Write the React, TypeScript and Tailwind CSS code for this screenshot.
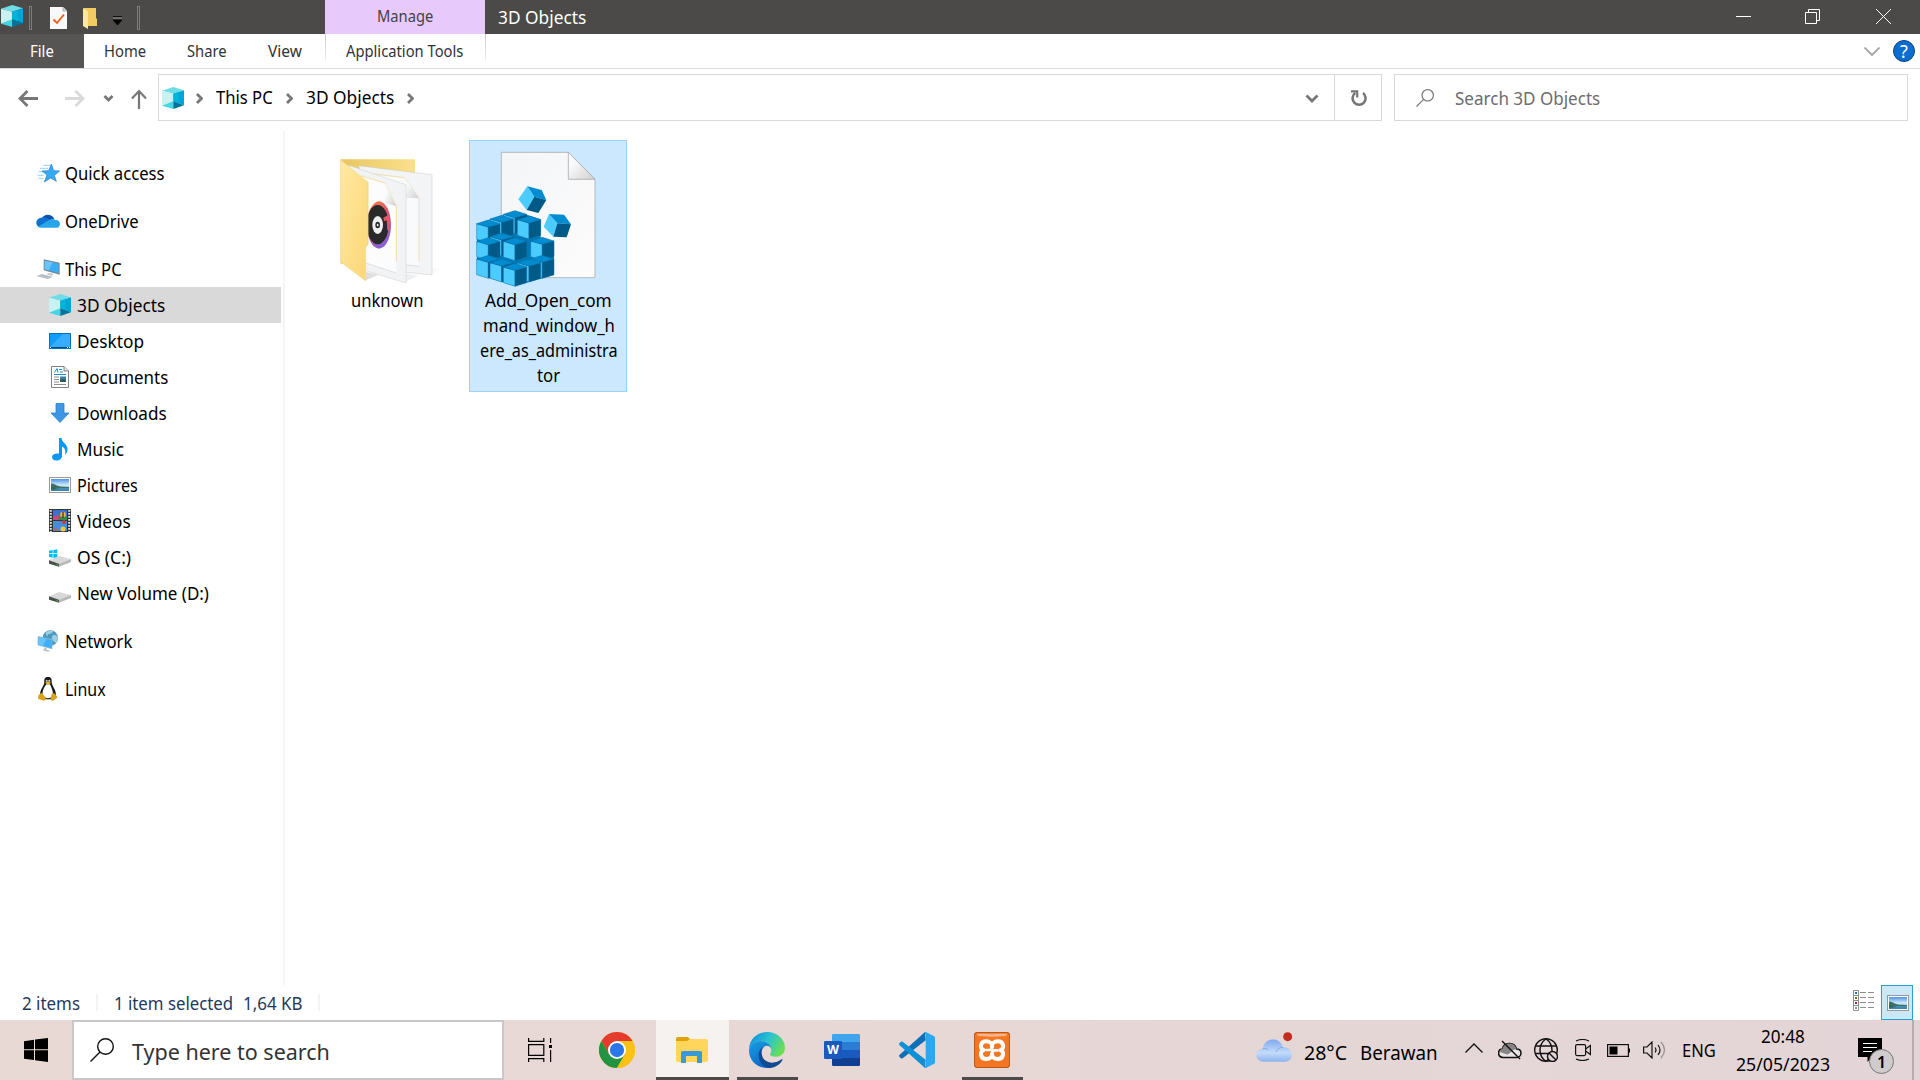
import { useLayoutEffect, useRef, useState, type ReactNode } from "react";

/** Single line of text, condensed so that it fills the width of its box. */
function T({ className = "", children }: { className?: string; children: string }) {
  const box = useRef<HTMLSpanElement>(null);
  const inner = useRef<HTMLSpanElement>(null);
  const [scale, setScale] = useState(1);
  useLayoutEffect(() => {
    if (!box.current || !inner.current) return;
    setScale(box.current.clientWidth / inner.current.offsetWidth);
  }, []);
  return (
    <span ref={box} className={"block shrink-0 whitespace-nowrap " + className}>
      <span ref={inner} className="inline-block origin-left" style={{ transform: `scaleX(${scale})` }}>
        {children}
      </span>
    </span>
  );
}

function Cube3D() {
  return (
    <svg className="h-[22px] w-[22px] shrink-0" viewBox="0 0 66 66">
      <path d="M0 11 34 0 66 10 34 20Z" fill="#6fdde8" />
      <path d="M0 11 34 20V44L0 56Z" fill="#c9f1f1" />
      <path d="M34 20 66 10V55L34 43Z" fill="#00a5da" />
      <path d="M34 20 50 15V49L34 43Z" fill="#00b6d8" />
      <path d="M0 56 34 43V66Z" fill="#42d5e4" />
      <path d="M34 43 66 55 34 66Z" fill="#00749c" />
    </svg>
  );
}

function PictureArt() {
  return (
    <svg className="h-4 w-[22px] shrink-0" viewBox="0 0 22 16">
      <defs>
        <linearGradient id="sky" x1="0" y1="0" x2="0" y2="1">
          <stop offset="0" stopColor="#4b93e6" />
          <stop offset=".5" stopColor="#cfe9fa" />
          <stop offset="1" stopColor="#5aa2cf" />
        </linearGradient>
      </defs>
      <rect x=".5" y=".5" width="21" height="15" fill="#fff" stroke="#989898" />
      <rect x="2" y="2" width="18" height="12" fill="url(#sky)" />
      <path d="M2 6.500c3 0 5 2 8 2.700 4 .6 7 .8 10 .8v1.500H2z" fill="#3d6f62" />
      <path d="M2 11.500h18V14H2z" fill="#3c87b5" />
      <path d="M2 10l8 2-8 1z" fill="#2f6b5a" />
    </svg>
  );
}

function Drive({ os }: { os?: boolean }) {
  return (
    <svg className="mt-1 h-[22px] w-[22px] shrink-0" viewBox="0 0 66 66">
      {os && (
        <g fill="#00bcf2">
          <path d="M0 8 11 6v10H0zM13 6l12-2v12H13zM0 18h11v11L0 27zM13 18h12v13l-12-2z" />
        </g>
      )}
      <path d="M0 37 30 24 66 33 30 47Z" fill="#d8d8d8" />
      <path d="M0 37 30 47V56L0 47Z" fill="#4b4f50" />
      <path d="M30 47 66 33V42L30 56Z" fill="#b5b7b8" />
      <path d="M22 48l6 2v3l-6-2z" fill="#3ec13e" />
    </svg>
  );
}

const icons: Record<string, ReactNode> = {
  quick: (
    <svg className="h-[22px] w-[24px]" viewBox="0 0 72 66">
      <path d="M22 10h20M12 19h24M8 29h14M5 40h18M8 49h14" stroke="#83c9f5" strokeWidth="2.500" />
      <path d="M46 6l7 20 18 1-16 13 6 18-17-10-19 12 8-21-15-12 20-1z" fill="#35aaf3" stroke="#1b7fd0" strokeWidth="2" />
    </svg>
  ),
  onedrive: (
    <svg className="mb-[2px] h-[22px] w-[24px]" viewBox="0 0 72 66">
      <path d="M18 27c5-12 29-15 37 3l-14 12z" fill="#0a50ac" />
      <path d="M12 55C-5 52-2 25 18 26c10-3 16 2 23 6L12 55z" fill="#0f70cf" />
      <path d="M41 32c4-4 14-4 16 1 13-2 19 12 12 20-1 1-4 3-8 3H14c-3 0-6-1-8-3z" fill="#28a5ea" />
    </svg>
  ),
  pc: (
    <svg className="mt-[2px] h-[24px] w-[24px]" viewBox="0 0 72 72">
      <path d="M23 4 71 14V50L23 37Z" fill="#7d8790" />
      <path d="M26 8 68 17V45L26 34Z" fill="#3aaef6" />
      <path d="M26 8 50 13 38 37 26 34Z" fill="#6cc5fa" />
      <path d="M40 45l14 3-8 5-15-4zM1 54l16-6 34 8-16 7z" fill="#c3c9ce" />
      <path d="M8 54l31 7M14 51l31 7" stroke="#8e979f" strokeWidth="1.500" strokeDasharray="4 2" />
    </svg>
  ),
  cube: <Cube3D />,
  desktop: (
    <svg className="h-4 w-[22px]" viewBox="0 0 22 16">
      <rect x=".5" y=".5" width="21" height="15" fill="#109cff" stroke="#0072bd" />
      <path d="M1 14 14 1h7v13z" fill="#36adff" />
      <path d="M1 14.500h20" stroke="#054d80" />
      <path d="M1 14.500h1M18 14.500h1M20 14.500h1" stroke="#fff" />
    </svg>
  ),
  documents: (
    <svg className="h-[22px] w-[18px]" viewBox="0 0 18 22">
      <path d="M.5.500H13l4.500 4.500V21.500H.5z" fill="#fdfdfd" stroke="#818181" />
      <path d="M13 .5V5h4.500" fill="#e2e2e2" stroke="#818181" />
      <path d="M3.500 6.500 6 2.500l1 4M8 3.500h3M9 6h3M3 8.500h12" stroke="#1b8edb" fill="none" />
      <path d="M3 11h5M3 13.500h5M3 16h5M3 18.500h12" stroke="#8f8f8f" />
      <rect x="9" y="10.500" width="6" height="5" fill="#3d7ea6" />
      <path d="M9 14l3-1 3 1v2H9z" fill="#2f5d4d" />
    </svg>
  ),
  downloads: (
    <svg className="h-[20px] w-[20px]" viewBox="0 0 20 20">
      <path d="M6 .5h8V10h5l-9 9.500L1 10h5z" fill="#3d97e5" stroke="#2b7fca" strokeWidth=".8" />
    </svg>
  ),
  music: (
    <svg className="h-[23px] w-[16px]" viewBox="0 0 16 23">
      <path d="M7 0h2.500c.2 4.500 6.500 6.500 6 11.500-.2 2.500-1 4-2.500 5.500.8-4 .5-6.500-3-8.500V18c0 2.500-2.400 4.500-5.500 4.500S0 21 0 18.700 3 15 7 15.500z" fill="#0a98f5" />
    </svg>
  ),
  pictures: <PictureArt />,
  videos: (
    <svg className="mb-[2px] h-[23px] w-[22px]" viewBox="0 0 22 23">
      <rect width="22" height="23" fill="#343434" />
      <path d="M1.800 1v22M20.200 1v22" stroke="#e5e5e5" strokeWidth="2" strokeDasharray="1.700 1.300" />
      <rect x="4" y="1" width="14" height="10" fill="#3a73cf" />
      <rect x="4" y="12" width="14" height="10" fill="#4a8be0" />
      <path d="M4 8l4-2 10 3v2H4z" fill="#d14578" />
      <path d="M10 8h8v3H9z" fill="#3e8a42" />
      <circle cx="14" cy="5.500" r="2.800" fill="#f0b92b" />
      <path d="M14 3v6" stroke="#2c2c2c" strokeWidth="1.200" />
      <circle cx="15" cy="13" r="2" fill="#cf3d2a" />
      <circle cx="14" cy="20" r="2.500" fill="#f0cb2b" />
      <circle cx="6.500" cy="20.500" r="1.500" fill="#d5573e" />
    </svg>
  ),
  os: <Drive os />,
  drive: <Drive />,
  network: (
    <svg className="h-[22px] w-[22px]" viewBox="0 0 66 66">
      <circle cx="40" cy="24" r="23" fill="#4c97bd" />
      <path d="M26 8c6-7 18-9 24-6l-6 8-10 3-4 7zM48 14l13 3c3 8 1 17-5 22l-8-7-4-9z" fill="#9fcde2" />
      <path d="M2 18 46 28V58L2 46Z" fill="#8fb9d3" />
      <path d="M4 21 44 30V55L4 44Z" fill="#3eaef7" />
      <path d="M4 21 28 26 18 48 4 44Z" fill="#69c4fb" />
      <path d="M22 52l6 2v5l12 3-7 3-18-5 7-2z" fill="#b5bdc3" />
    </svg>
  ),
  linux: (
    <svg className="h-[24px] w-[20px]" viewBox="0 0 60 72">
      <path d="M30 0c-9 0-12 6-11 15 1 10-14 22-13 40l12 12h25l11-12c0-19-13-29-13-40C42 6 39 0 30 0z" fill="#16191b" />
      <path d="M25 22c-5 7-13 19-11 31 4 13 26 15 31 0 1-11-6-23-9-31z" fill="#fff" />
      <circle cx="26" cy="11" r="3" fill="#d6d6d6" />
      <circle cx="34" cy="11" r="3" fill="#d6d6d6" />
      <path d="M21 17l9-4 9 4-9 7z" fill="#eab526" />
      <path d="M10 47l14 15c0 8-5 10-11 8L1 66c-2-4 0-6 1-12zM49 49l10 12-13 10c-7 1-9-3-8-9l4-13z" fill="#d9a31b" />
    </svg>
  ),
};

type Row = { icon: string; label: string; w: string; sub?: boolean; active?: boolean; gap?: boolean };
const rows: Row[] = [
  { icon: "quick", label: "Quick access", w: "w-[100px]" },
  { icon: "onedrive", label: "OneDrive", w: "w-[74px]", gap: true },
  { icon: "pc", label: "This PC", w: "w-[57px]", gap: true },
  { icon: "cube", label: "3D Objects", w: "w-[88px]", sub: true, active: true },
  { icon: "desktop", label: "Desktop", w: "w-[67px]", sub: true },
  { icon: "documents", label: "Documents", w: "w-[91px]", sub: true },
  { icon: "downloads", label: "Downloads", w: "w-[90px]", sub: true },
  { icon: "music", label: "Music", w: "w-[47px]", sub: true },
  { icon: "pictures", label: "Pictures", w: "w-[61px]", sub: true },
  { icon: "videos", label: "Videos", w: "w-[54px]", sub: true },
  { icon: "os", label: "OS (C:)", w: "w-[54px]", sub: true },
  { icon: "drive", label: "New Volume (D:)", w: "w-[132px]", sub: true },
  { icon: "network", label: "Network", w: "w-[67px]", gap: true },
  { icon: "linux", label: "Linux", w: "w-[41px]", gap: true },
];

function Sidebar() {
  return (
    <nav className="h-[854px] w-[285px] shrink-0 border-r-2 border-[#f5f5f5] pt-6">
      {rows.map((r) => (
        <div
          key={r.label}
          className={
            "flex h-9 w-[281px] items-center " +
            (r.gap ? "mt-3 " : "") +
            (r.sub ? "pl-12 " : "pl-9 ") +
            (r.active ? "bg-[#d9d9d9]" : "")
          }
        >
          <span className="flex w-6 shrink-0 items-center justify-center">{icons[r.icon]}</span>
          <T className={"ml-[5px] mt-px " + r.w}>{r.label}</T>
        </div>
      ))}
    </nav>
  );
}

function FolderArt() {
  return (
    <svg className="ml-[29px] h-[130px] w-[110px] self-start" viewBox="50 80 330 390">
      <defs>
        <linearGradient id="flap" x1="0" y1="0" x2="1" y2="1">
          <stop offset="0" stopColor="#ffe9a2" />
          <stop offset="1" stopColor="#fbd775" />
        </linearGradient>
        <linearGradient id="back" x1="0" y1="0" x2="1" y2="0">
          <stop offset="0" stopColor="#e8c560" />
          <stop offset="1" stopColor="#fbe08c" />
        </linearGradient>
        <linearGradient id="fold" x1="0" y1="0" x2="1" y2="1">
          <stop offset=".3" stopColor="#fafafa" />
          <stop offset="1" stopColor="#cfcfcf" />
        </linearGradient>
        <linearGradient id="shade" x1="0" y1="0" x2="1" y2="0">
          <stop offset="0" stopColor="#b5b5b5" />
          <stop offset="1" stopColor="#fff" />
        </linearGradient>
        <linearGradient id="ring" x1="0" y1="0" x2=".4" y2="1">
          <stop offset="0" stopColor="#fb8a3c" />
          <stop offset=".45" stopColor="#e0536b" />
          <stop offset="1" stopColor="#8a62cf" />
        </linearGradient>
      </defs>
      <path d="M330 410l45 5-42 18zM136 425l40 8-40 17zM256 430l40 5-40 20z" fill="url(#shade)" opacity=".45" />
      <path d="M61 87H284V400H61Z" fill="url(#back)" />
      <path d="M114 106 335 133V434L250 425Z" fill="#f3f4f5" stroke="#c9c9c9" strokeWidth="1.500" />
      <path d="M150 130 252 142 296 204V408L210 400Z" fill="#fafafb" />
      <path d="M150 130 252 142 296 204M296 285V392" fill="none" stroke="#ead28b" strokeWidth="2" />
      <path d="M296 204V285M296 408 256 404" fill="none" stroke="#c4c4c4" strokeWidth="1.500" />
      <path d="M252 142 296 204 256 202Z" fill="url(#fold)" />
      <path d="M85 105 257 163V458L100 410Z" fill="#f2f3f4" stroke="#cfcfcf" strokeWidth="1.500" />
      <path d="M105 130 193 158 228 228V428L110 390Z" fill="#fcfcfd" />
      <path d="M122 136 193 158 228 228V392" fill="none" stroke="#efd27b" strokeWidth="2" />
      <path d="M193 158 228 228 195 218Z" fill="url(#fold)" />
      <path d="M136 398 228 428" stroke="#aaa" strokeWidth="1.500" strokeDasharray="4 2" />
      <ellipse cx="176" cy="284" rx="36" ry="71" fill="url(#ring)" />
      <ellipse cx="172" cy="283" rx="33" ry="59" fill="#2b2a2b" />
      <path d="M189 262l18-10 2 50-8-2-2-30-8 3z" fill="#e0576a" />
      <ellipse cx="172" cy="284" rx="16" ry="27" fill="#f0f0f0" />
      <ellipse cx="172" cy="284" rx="7" ry="10" fill="#2b2a2b" />
      <ellipse cx="172" cy="284" rx="2.500" ry="4" fill="#fff" />
      <path d="M61 88 143 155V342L136 350V452L61 395Z" fill="url(#flap)" stroke="#ecca6c" strokeWidth="1" />
      <path d="M136 350 143 342V155" fill="none" stroke="#f3d67e" strokeWidth="2" />
    </svg>
  );
}

const blocks: [number, number][] = [
  [585, 263], [545, 277], [505, 291],
  [545, 330], [505, 344], [627, 279], [667, 343], [505, 397], [667, 397],
  [585, 344], [545, 408], [627, 408], [585, 421],
];

function Block({ x, y }: { x: number; y: number }) {
  return (
    <g transform={`translate(${x} ${y})`} stroke="#0b6ea6" strokeWidth="1.500">
      <path d="M0 0-35-10V37L0 48Z" fill="#4ccbff" />
      <path d="M0 0 35-10V37L0 48Z" fill="#005a87" />
      <path d="M0 0-35-10 0-21 35-10Z" fill="#008cd0" />
    </g>
  );
}

function RegistryArt() {
  return (
    <svg className="ml-1 h-[138px] w-[130px] self-start" viewBox="465 60 390 414">
      <defs>
        <linearGradient id="page" x1="0" y1="0" x2="1" y2="1">
          <stop offset="0" stopColor="#f4f5f6" />
          <stop offset="1" stopColor="#fcfcfd" />
        </linearGradient>
      </defs>
      <path d="M544 67H745L825 148V443H544Z" fill="url(#page)" stroke="#a9adb0" strokeWidth="2.500" />
      <path d="M745 67 825 148H745Z" fill="url(#fold)" stroke="#a9adb0" strokeWidth="2.500" />
      <path d="M471 283 585 243 662 268V325L702 335V435L585 468 471 432Z" fill="#0079b5" />
      {blocks.map(([x, y]) => (
        <Block key={x + "-" + y} x={x} y={y} />
      ))}
      <path d="M595 208 622 169 643 200 620 240Z" fill="#4ccbff" />
      <path d="M622 169 665 180 679 210 643 200Z" fill="#008cd0" />
      <path d="M643 200 679 210 655 249 620 240Z" fill="#005a87" />
      <path d="M671 290 687 252 712 280 700 320Z" fill="#4ccbff" />
      <path d="M687 252 732 254 753 283 712 280Z" fill="#008cd0" />
      <path d="M712 280 753 283 740 322 700 320Z" fill="#005a87" />
    </svg>
  );
}

function TitleBar() {
  return (
    <header className="flex h-[34px] bg-[#4c4a48]">
      <div className="flex w-[325px] items-start">
        <span className="ml-px mt-[5px]"><Cube3D /></span>
        <span className="ml-[6px] mt-[6px] h-6 w-[3px] border border-[#7e7c7a]" />
        <svg className="ml-[18px] mt-[7px] h-[22px] w-[17px]" viewBox="0 0 17 22">
          <path d="M0 0h13l4 4v18H0z" fill="#f7f9fb" />
          <path d="M13 0v4h4" fill="#cfd3d6" stroke="#8c8c8c" strokeWidth=".6" />
          <path d="M3.500 12.500 7 16l7-8.500" fill="none" stroke="#f25a14" strokeWidth="1.800" />
        </svg>
        <svg className="ml-4 mt-2 h-[21px] w-[14px]" viewBox="0 0 14 21">
          <path d="M1 0h12v10l1 1v7H1z" fill="#f2cb62" />
          <path d="M0 0l5 3.500V21l-5-3z" fill="#ffe79b" />
        </svg>
        <svg className="ml-4 mt-4 h-[9px] w-[9px]" viewBox="0 0 9 9">
          <path d="M0 .5h9M0 4h9L4.500 9z" fill="#000" stroke="#000" strokeWidth=".8" />
          <path d="M0 2h9" stroke="#a8a6a4" strokeWidth=".8" />
        </svg>
        <span className="ml-[15px] mt-[6px] h-6 w-[3px] border border-[#7e7c7a]" />
      </div>
      <div className="flex w-40 items-center justify-center bg-[#e8c9fb] text-[15.500px] text-[#444]">
        <T className="mb-[2px] mr-px w-[56px]">Manage</T>
      </div>
      <div className="flex items-center pl-[13px] text-white">
        <T className="w-[88px]">3D Objects</T>
      </div>
      <svg className="ml-auto mr-7 mt-[9px] h-[15px] w-[156px]" viewBox="0 0 156 15" fill="none" stroke="#fff">
        <path d="M0 7.500h15M69.500 3.500h11v11h-11zM72.500 3.500v-3h11v11h-3M140 0l15 15M155 0l-15 15" />
      </svg>
    </header>
  );
}

function Ribbon() {
  return (
    <div className="flex h-[35px] items-center border-b border-[#dadbdc] text-[15.500px] text-[#333]">
      <div className="flex h-[34px] w-[84px] items-center bg-[#575553] pl-[30px] text-white">
        <T className="w-6">File</T>
      </div>
      <T className="ml-5 w-[42px]">Home</T>
      <T className="ml-[41px] w-10">Share</T>
      <T className="ml-[41px] w-[34px]">View</T>
      <div className="ml-[23px] flex h-[34px] w-[161px] justify-between">
        <span className="h-[26px] w-px bg-linear-to-b from-[#c8c8c8] to-[#eee]" />
        <T className="mr-[2px] mt-[6px] w-[117px]">Application Tools</T>
        <span className="h-[26px] w-px bg-linear-to-b from-[#c8c8c8] to-[#eee]" />
      </div>
      <svg className="ml-auto mt-px h-[9px] w-4" viewBox="0 0 16 9" fill="none" stroke="#a3a3a3" strokeWidth="1.800">
        <path d="M.5.500 8 8l7.500-7.500" />
      </svg>
      <span className="ml-[13px] mr-[5px] flex h-[22px] w-[22px] items-center justify-center rounded-full border border-[#04427f] bg-[#0a6dcf] text-[18px] leading-none text-white">
        ?
      </span>
    </div>
  );
}

function Crumb({ className }: { className: string }) {
  return (
    <svg className={"h-[11px] w-[7px] shrink-0 " + className} viewBox="0 0 7 11" fill="none" stroke="#777" strokeWidth="2.800">
      <path d="M1 1l4.500 4.500L1 10" />
    </svg>
  );
}

function AddressBar() {
  return (
    <div className="flex h-[62px] items-start pt-[5px]">
      <svg className="h-[47px] w-[158px]" viewBox="0 0 158 47" fill="none" stroke="#777" strokeWidth="2.800">
        <path d="M38 24.500H21M27.500 17l-7.500 7.500 7.500 7.500" />
        <path d="M65 24.500h17M75.500 17l7.500 7.500-7.500 7.500" stroke="#dadada" />
        <path d="M104.500 22l4 4 4-4" />
        <path d="M139 35V17M132 24.500l7-7.500 7 7.500" strokeWidth="2.200" />
      </svg>
      <div className="flex h-[47px] w-[1224px] items-center border border-[#d9d9d9] pl-[3px]">
        <Cube3D />
        <Crumb className="ml-3 mt-px" />
        <T className="ml-[13px] w-[57px]">This PC</T>
        <Crumb className="ml-[13px] mt-px" />
        <T className="ml-[13px] w-[88px]">3D Objects</T>
        <Crumb className="ml-[13px] mt-px" />
        <svg className="ml-auto mt-px h-[9px] w-[14px]" viewBox="0 0 14 9" fill="none" stroke="#777" strokeWidth="2.800">
          <path d="M1.500 1.500 7 7l5.500-5.500" />
        </svg>
        <span className="ml-[15px] flex h-full w-[47px] items-center justify-center border-l border-[#d9d9d9]">
          <svg className="ml-[2px] h-4 w-4" viewBox="0 0 16 16" fill="none" stroke="#777" strokeWidth="2.600">
            <path d="M4.200 3A6.500 6.500 0 1 0 12 3" />
            <path d="M0 1.300h6.200V7.500" strokeWidth="2.200" />
          </svg>
        </span>
      </div>
      <div className="ml-3 flex h-[47px] w-[514px] items-center border border-[#d9d9d9] text-[#6d6d6d]">
        <svg className="ml-[21px] h-[18px] w-[18px]" viewBox="0 0 18 18" fill="none" stroke="#777" strokeWidth="1.200">
          <circle cx="11.700" cy="6.300" r="5.700" />
          <path d="M7.700 10.300.5 17.500" />
        </svg>
        <T className="ml-[21px] mt-[2px] w-[145px]">Search 3D Objects</T>
      </div>
    </div>
  );
}

function StatusBar() {
  return (
    <div className="flex h-[35px] items-center text-[#1e395b]">
      <T className="ml-[22px] mt-px w-[58px]">2 items</T>
      <span className="ml-4 h-[17px] w-[2px] bg-[#f3f3f3]" />
      <T className="ml-4 mt-px w-[119px]">1 item selected</T>
      <T className="ml-[10px] mt-px w-[59px]">1,64 KB</T>
      <span className="ml-4 h-[17px] w-[2px] bg-[#f3f3f3]" />
      <svg className="mb-1 ml-auto h-[21px] w-[22px]" viewBox="0 0 22 21" fill="none">
        <path d="M.5.500h5v20h-5zM.5 5.500h5M.5 10.500h5M.5 15.500h5" stroke="#8d8d8d" />
        <path d="M7 2.500h6M15 2.500h6M7 7.500h6M15 7.500h6M7 12.500h6M15 12.500h6M7 17.500h6M15 17.500h6" stroke="#8d8d8d" />
        <path d="M2 3h2" stroke="#1d6fb5" strokeWidth="2" />
        <path d="M2 8h2" stroke="#6f7a20" strokeWidth="2" />
        <path d="M2 13h2" stroke="#c41f1f" strokeWidth="2" />
        <path d="M2 18h2" stroke="#7fa58f" strokeWidth="2" />
      </svg>
      <span className="ml-[6px] mr-[7px] flex h-[35px] w-8 justify-center border border-[#26a0da] bg-[#cbe8f6] pl-px pt-[9px]">
        <PictureArt />
      </span>
    </div>
  );
}

function ChromeLogo() {
  return (
    <svg className="h-9 w-9" viewBox="0 0 48 48">
      <circle cx="24" cy="24" r="24" fill="#fbc116" />
      <path d="M24 12H44.800A24 24 0 0 0 3.200 12L13.600 30Z" fill="#e33b2e" />
      <path d="M3.200 12A24 24 0 0 0 24 48L34.400 30 24 24 13.600 30Z" fill="#229342" />
      <path d="M24 48A24 24 0 0 0 44.800 12H24L34.400 30Z" fill="#fbc116" />
      <circle cx="24" cy="24" r="12" fill="#fff" />
      <circle cx="24" cy="24" r="9.500" fill="#2a76ea" />
    </svg>
  );
}

function ExplorerLogo() {
  return (
    <svg className="h-[26px] w-8" viewBox="0 0 32 26">
      <path d="M0 2Q0 0 2 0h10l3 3v5H0z" fill="#e0a106" />
      <path d="M0 4h11l3-2h16q2 0 2 2v19q0 2-2 2H2q-2 0-2-2z" fill="#ffd55c" />
      <path d="M5 26V15.500Q5 14 6.500 14h18q1.500 0 1.500 1.500V26h-5v-7H10v7z" fill="#3a97dc" />
    </svg>
  );
}

function EdgeLogo() {
  return (
    <svg className="h-9 w-9" viewBox="0 0 108 108">
      <defs>
        <linearGradient id="edgeTop" x1="0" y1=".2" x2="1" y2=".6">
          <stop offset="0" stopColor="#0c8fdc" />
          <stop offset=".5" stopColor="#2cc3d0" />
          <stop offset="1" stopColor="#6be04f" />
        </linearGradient>
        <linearGradient id="edgeLeft" x1="0" y1="0" x2=".6" y2="1">
          <stop offset="0" stopColor="#1ba0e3" />
          <stop offset="1" stopColor="#0a63c4" />
        </linearGradient>
      </defs>
      <path d="M0 50C2 20 26 0 54 0c32 0 54 23 54 47 0 18-13 27-27 27-12 0-18-3-18-7 0-3 4-4 4-12C67 40 52 27 34 27 17 27 3 38 0 50z" fill="url(#edgeTop)" />
      <path d="M0 56C0 38 14 27 34 27c18 0 33 12 33 27 0-7-6-13-13-13-11 0-19 12-19 25 0 20 13 37 34 40-5 2-10 2-15 2C24 108 0 84 0 56z" fill="url(#edgeLeft)" />
      <path d="M44 44c-9 11-8 30 4 41 16 12 37 7 50-3 2-1 4 0 2 3-7 12-21 23-38 23-19 0-33-20-33-39 0-10 6-21 15-25z" fill="#114a93" />
    </svg>
  );
}

function WordLogo() {
  return (
    <svg className="h-9 w-9" viewBox="0 0 108 108">
      <path d="M24 10Q24 6 28 6H104Q108 6 108 10V30H24Z" fill="#41a5ee" />
      <path d="M24 30H108V54H24Z" fill="#2b7cd3" />
      <path d="M24 54H108V78H24Z" fill="#185abd" />
      <path d="M24 78H108V98Q108 102 104 102H28Q24 102 24 98Z" fill="#103f91" />
      <rect x="0" y="27" width="54" height="54" rx="4" fill="#185abd" />
      <text x="27" y="67" textAnchor="middle" fill="#fff" className="font-['Open_Sans'] text-[37px] font-bold">W</text>
    </svg>
  );
}

function CodeLogo() {
  return (
    <svg className="h-9 w-9" viewBox="0 0 108 108">
      <path d="M80 25 12 78Q9 81 6 79L1 74Q-1 71 2 68L78 0Z" fill="#0b70b5" />
      <path d="M80 83 12 30Q9 27 6 29L1 34Q-1 37 2 40L78 108Z" fill="#0f8fd8" />
      <path d="M76 1Q78-1 82 1L104 12Q108 14 108 18V90Q108 94 104 96L82 107Q78 109 76 107L80 100V8Z" fill="#29a8f3" />
    </svg>
  );
}

function XamppLogo() {
  return (
    <svg className="h-9 w-9" viewBox="0 0 108 108">
      <rect x="1" y="1" width="106" height="106" rx="9" fill="#f37623" stroke="#b14f10" strokeWidth="3" />
      <path d="M10 5H98V11Q54 17 10 11Z" fill="#fbb183" />
      <g fill="none" stroke="#fff" strokeWidth="12" strokeLinecap="round" strokeLinejoin="round">
        <path d="M54 44C54 35 48 28 37 28 18 28 16 49 29 54 16 58 18 81 37 81 48 81 54 74 54 66" />
        <path d="M54 44C54 35 60 28 71 28 90 28 92 49 79 54 92 58 90 81 71 81 60 81 54 74 54 66" />
        <path d="M37 54H45Q54 54 54 45M54 64Q54 55 63 55H71" strokeWidth="8" />
      </g>
    </svg>
  );
}

function TaskButton({ line, active, children }: { line?: boolean; active?: boolean; children: ReactNode }) {
  return (
    <div className={"flex h-[60px] w-[73px] flex-col items-center " + (active ? "bg-[#f6f2f0]" : "")}>
      <span className="mr-[2px] flex h-[57px] items-center pt-[3px]">{children}</span>
      {active && <span className="h-[3px] w-full bg-[#4c4a48]" />}
      {line && <span className="h-[3px] w-[61px] bg-[#4c4a48]" />}
    </div>
  );
}

function Tray() {
  return (
    <div className="flex h-[60px] items-center text-black">
      <svg className="mb-1 ml-[227px] h-[30px] w-9 shrink-0 overflow-visible" viewBox="0 0 108 90">
        <defs>
          <linearGradient id="cloud" x1="0" y1="0" x2="0" y2="1">
            <stop offset="0" stopColor="#7fa9ef" />
            <stop offset=".6" stopColor="#c4dbfa" />
            <stop offset="1" stopColor="#8db4ee" />
          </linearGradient>
        </defs>
        <path d="M22 86C-6 86-5 47 20 47 27 11 73 11 81 43c33-4 36 43 6 43z" fill="url(#cloud)" />
        <path d="M20 47c9-2 14 1 17 4M60 57c4-10 12-14 21-14" fill="none" stroke="#7199dd" strokeWidth="2" />
        <circle cx="95" cy="11" r="13.500" fill="#c42b1c" />
      </svg>
      <T className="ml-3 mt-1 w-[43px] text-[20px]">28°C</T>
      <T className="ml-[13px] mt-1 w-[78px] text-[20px]">Berawan</T>
      <svg className="mb-1 ml-[27px] h-[10px] w-[18px]" viewBox="0 0 18 10" fill="none" stroke="#111" strokeWidth="1.300">
        <path d="M.5 9.500 9 1l8.500 8.500" />
      </svg>
      <svg className="ml-[15px] h-[20px] w-6" viewBox="0 0 24 20">
        <path d="M5 17.500C-1 17-.5 9 4.500 9c1-6.500 12-8 14 0 6-.5 6 8.500 0 8.500z" fill="#e8e4e6" stroke="#111" strokeWidth="1.500" />
        <path d="M1.500 12C2 9.500 4 9 4.500 9c1-6.500 12-8 14 0-4 0-5 4-9 5.500z" fill="#858585" />
        <path d="M4 1l18 18" stroke="#111" strokeWidth="1.500" />
      </svg>
      <svg className="ml-3 h-6 w-6" viewBox="0 0 24 24" fill="none" stroke="#111" strokeWidth="1.400">
        <circle cx="12" cy="12" r="11.300" />
        <path d="M12 .7c-8 6-8 17 0 22.600M12 .7c8 6 8 17 0 22.600M2 8h20M2 15.500h20" />
        <circle cx="18.500" cy="18.500" r="5" fill="#e3d3d8" />
        <path d="M15 15l7 7" />
      </svg>
      <svg className="ml-[17px] h-[22px] w-4" viewBox="0 0 16 22" fill="none" stroke="#111" strokeWidth="1.200">
        <rect x=".6" y="5.600" width="10" height="11" rx="1.500" />
        <path d="M10.600 10l4.800-3.500v9l-4.800-3.500M1 2q6.500-3 13 0M1 20q6.500 3 13 0" />
      </svg>
      <svg className="ml-4 h-[13px] w-[23px]" viewBox="0 0 23 13">
        <rect x=".6" y=".6" width="20.800" height="11.800" fill="none" stroke="#111" strokeWidth="1.200" />
        <path d="M2.500 2.500h8v8h-8zM22 4.500h1v4h-1z" fill="#000" />
      </svg>
      <svg className="ml-[13px] h-[18px] w-[23px]" viewBox="0 0 23 18" fill="none" stroke="#111" strokeWidth="1.200">
        <path d="M.6 6H4l5-5v16l-5-5H.6zM12 6.500q2 2.500 0 5M15 4q4 5 0 10" />
        <path d="M18 1q7 8 0 16" stroke="#998f93" />
      </svg>
      <T className="ml-4 w-[34px]">ENG</T>
      <div className="ml-5 flex w-[93px] flex-col items-center leading-[28px]">
        <T className="w-[44px]">20:48</T>
        <T className="w-[94px]">25/05/2023</T>
      </div>
      <svg className="ml-[29px] mt-[12px] h-9 w-9" viewBox="0 0 36 36">
        <path d="M0 0h24v19H14l-4.500 5V19H0z" fill="#000" />
        <path d="M5 5.500h14M5 9.500h14M5 13.500h9" stroke="#fff" />
        <circle cx="23.500" cy="23.500" r="12" fill="#d0cbcc" stroke="#77787a" />
        <text x="23.500" y="29.500" textAnchor="middle" className="font-['Noto_Sans'] text-[16px] font-semibold">1</text>
      </svg>
      <span className="ml-[18px] h-[60px] w-[2px] bg-[#b9adad]" />
    </div>
  );
}

function Taskbar() {
  return (
    <footer className="flex h-[60px] bg-linear-to-r from-[#e9d9d5] via-[#e7d8d6] to-[#e3d4d7]">
      <span className="flex w-[72px] items-center justify-center">
        <svg className="h-6 w-6" viewBox="0 0 24 24">
          <path d="M0 3.200 10 1.800V11.300H0zM11 1.600 24 0V11.300H11zM0 12.300H10V22L0 20.700zM11 12.300H24V24L11 22.200z" />
        </svg>
      </span>
      <div className="flex w-[432px] items-center border-2 border-[#c8c8c8] bg-white text-[21.500px] text-[#333]">
        <svg className="ml-4 h-6 w-6" viewBox="0 0 24 24" fill="none" stroke="#111" strokeWidth="1.400">
          <circle cx="15.500" cy="8.500" r="7.800" />
          <path d="M10 14 .5 23.500" />
        </svg>
        <T className="ml-[18px] mt-[2px] w-[198px]">Type here to search</T>
      </div>
      <span className="flex w-[77px] items-center pl-6">
        <svg className="h-6 w-6" viewBox="0 0 24 24" fill="none" stroke="#000" strokeWidth="1.200">
          <path d="M.6 0v3.400h15.200V0M.6 24v-3.400h15.200V24M.6 6.600h15.200v10.800H.6zM22.600 0v5M22.600 12v12" />
          <path d="M21 8.500h3" strokeWidth="3" />
        </svg>
      </span>
      <div className="flex gap-[2px]">
        <TaskButton><ChromeLogo /></TaskButton>
        <TaskButton active><ExplorerLogo /></TaskButton>
        <TaskButton line><EdgeLogo /></TaskButton>
        <TaskButton><WordLogo /></TaskButton>
        <TaskButton><CodeLogo /></TaskButton>
        <TaskButton line><XamppLogo /></TaskButton>
      </div>
      <Tray />
    </footer>
  );
}

export default function App() {
  return (
    <div className="flex h-[1080px] w-[1920px] flex-col overflow-hidden bg-white font-['Noto_Sans','Open_Sans',sans-serif] text-[17.500px] leading-[23px] text-black">
      <TitleBar />
      <Ribbon />
      <AddressBar />
      <div className="flex h-[854px]">
        <Sidebar />
        <main className="flex items-start pl-[23px] pt-[9px]">
          <div className="flex h-[252px] w-[158px] flex-col items-center pt-[17px]">
            <FolderArt />
            <T className="mt-[2px] w-[73px]">unknown</T>
          </div>
          <div className="ml-[3px] flex h-[252px] w-[158px] flex-col items-center border border-[#99d1ff] bg-[#cce8ff] pl-px pt-[9px] leading-[25px]">
            <RegistryArt />
            <T className="w-[127px]">Add_Open_com</T>
            <T className="w-[132px]">mand_window_h</T>
            <T className="w-[138px]">ere_as_administra</T>
            <T className="w-[23px]">tor</T>
          </div>
        </main>
      </div>
      <StatusBar />
      <Taskbar />
    </div>
  );
}
